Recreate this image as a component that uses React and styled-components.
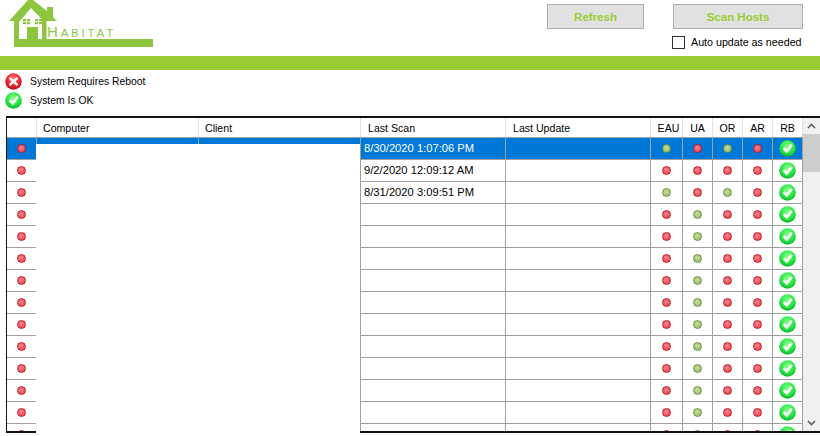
import React from "react";
import styled, { createGlobalStyle } from "styled-components";

const { useId } = React;

const GREEN = "#9acd32";
const LOGO_GREEN = "#8cc63f";
const COLUMNS = "30px 162px 162px 145px 145px 32px 30px 30px 30px 30px";

const GlobalStyle = createGlobalStyle`
  html, body {
    margin: 0;
    padding: 0;
    background: #fff;
    overflow: hidden;
  }
  body {
    font-family: "Liberation Sans", Arial, sans-serif;
    font-size: 10.6px;
    color: #000;
  }
`;

const Page = styled.div`
  width: 820px;
  height: 436px;
  overflow: hidden;
  display: flex;
  flex-direction: column;
`;

const Header = styled.header`
  height: 56px;
  display: flex;
  justify-content: space-between;
  padding-right: 17px;
  box-sizing: border-box;
`;

const Logo = styled.svg`
  width: 154px;
  height: 48px;
  display: block;
`;

const Actions = styled.div`
  display: grid;
  grid-template-columns: 97px 130px;
  column-gap: 29px;
  padding-top: 4px;
  align-content: start;
`;

const ActionButton = styled.button`
  height: 25px;
  padding: 0;
  background: #e1e1e1;
  border: 1px solid #adadad;
  color: ${GREEN};
  font-family: "Liberation Sans", Arial, sans-serif;
  font-size: 11.5px;
  font-weight: bold;
`;

const AutoUpdate = styled.label`
  grid-column: 2;
  display: flex;
  align-items: center;
  gap: 6px;
  margin: 6px 0 0 -1px;
  font-size: 10.7px;
  line-height: 14px;
  white-space: nowrap;
`;

const Box = styled.span`
  width: 11px;
  height: 11px;
  border: 1px solid #333;
  background: #fff;
`;

const Band = styled.div`
  height: 14px;
  background: ${GREEN};
`;

const Legend = styled.div`
  height: 46px;
  padding: 2px 0 0 5px;
  box-sizing: border-box;
  font-size: 10.4px;
`;

const LegendRow = styled.div`
  height: 19px;
  display: flex;
  align-items: center;
  gap: 8px;
`;

const GridFrame = styled.div`
  position: relative;
  height: 317px;
  margin-left: 6px;
  border-top: 2px solid #111;
  border-bottom: 2px solid #111;
  border-left: 1px solid #111;
  box-sizing: border-box;
  display: flex;
`;

const Table = styled.div`
  width: 796px;
  height: 313px;
  flex: none;
  overflow: hidden;
`;

const HeaderRow = styled.div`
  display: grid;
  grid-template-columns: ${COLUMNS};
  height: 20px;
  box-sizing: border-box;
  border-bottom: 1px solid #a0a0a0;
`;

const HeaderCell = styled.div`
  border-right: 1px solid #e2e2e2;
  box-sizing: border-box;
  display: flex;
  align-items: center;
  justify-content: ${(p) => (p.$center ? "center" : "flex-start")};
  padding-left: ${(p) => (p.$center ? `${p.$pad || 0}px` : `${p.$pad || 6}px`)};
  white-space: nowrap;
`;

const Row = styled.div`
  display: grid;
  grid-template-columns: ${COLUMNS};
  height: 22px;
  box-sizing: border-box;
  border-bottom: 1px solid #a0a0a0;
  background: ${(p) => (p.$selected ? "#0078d7" : "#fff")};
  color: ${(p) => (p.$selected ? "#fff" : "#000")};
`;

const Cell = styled.div`
  border-right: 1px solid #a0a0a0;
  box-sizing: border-box;
  display: flex;
  align-items: center;
  justify-content: ${(p) => (p.$center ? "center" : "flex-start")};
  padding: ${(p) => (p.$center ? "0 1px 1px 0" : "0 0 1px 3px")};
  font-size: 11.2px;
  white-space: nowrap;
`;

const Dot = styled.span`
  width: 9px;
  height: 9px;
  border-radius: 50%;
  box-sizing: border-box;
  border: 1px solid ${(p) => (p.$on ? "#6f9440" : "#c21a28")};
  background: ${(p) =>
    p.$on
      ? "radial-gradient(circle at 45% 40%, #c8dd9e, #8fb45c)"
      : "radial-gradient(circle at 45% 40%, #fb8a90, #e8323f)"};
`;

const Redaction = styled.div`
  position: absolute;
  left: 29px;
  top: 26px;
  bottom: -2px;
  width: 324px;
  background: #fff;
`;

const Scrollbar = styled.div`
  flex: 1;
  background: #f0f0f0;
  display: flex;
  flex-direction: column;
`;

const ScrollButton = styled.div`
  height: 16px;
  display: flex;
  align-items: center;
  justify-content: center;
  flex: none;
`;

const Thumb = styled.div`
  height: 38px;
  background: #cdcdcd;
`;

const ScrollSpace = styled.div`
  flex: 1;
`;

const Chevron = ({ down }) => (
  <svg width="9" height="6" viewBox="0 0 9 6">
    <path
      d={down ? "M1 1l3.5 3.5L8 1" : "M1 5l3.5-3.5L8 5"}
      fill="none"
      stroke="#606060"
      strokeWidth="1.7"
    />
  </svg>
);

const StatusIcon = ({ ok }) => {
  const id = useId();
  return (
    <svg width="17" height="17" viewBox="0 0 17 17" style={{ flex: "none" }}>
      <defs>
        <radialGradient id={id} cx="50%" cy="35%" r="70%">
          <stop offset="0%" stopColor={ok ? "#8bff8b" : "#ff8080"} />
          <stop offset="60%" stopColor={ok ? "#1fe83f" : "#ee2029"} />
          <stop offset="100%" stopColor={ok ? "#0aa52a" : "#a50c16"} />
        </radialGradient>
      </defs>
      <circle cx="8.5" cy="8.5" r="8.3" fill={`url(#${id})`} />
      {ok ? (
        <path d="M3.6 9l2.2-2 1.9 2.3L11.6 4l2.2 1.5L7.9 13.6z" fill="#fff" />
      ) : (
        <path
          d="M5.2 4l3.3 2.8L11.8 4l1.5 1.5-2.9 3 2.9 3-1.5 1.5-3.3-2.8L5.2 13l-1.5-1.5 2.9-3-2.9-3z"
          fill="#fff"
        />
      )}
    </svg>
  );
};

const scans = ["8/30/2020 1:07:06 PM", "9/2/2020 12:09:12 AM", "8/31/2020 3:09:51 PM"];
const rows = Array.from({ length: 14 }, (_, i) => ({
  scan: scans[i] || "",
  flags:
    i === 0 || i === 2
      ? [true, false, true, false]
      : i === 1
      ? [false, false, false, false]
      : [false, true, false, false],
}));

export default function App() {
  return (
    <Page>
      <GlobalStyle />
      <Header>
        <Logo viewBox="0 0 154 48">
          <path
            fill={LOGO_GREEN}
            fillRule="evenodd"
            d="M9 21L28 0h5l14 11V7h6v10l4 4H46.5v18H153v8H14V21zM19 22V39h23V19.5L31 8z"
          />
          <path
            fill={LOGO_GREEN}
            d="M27 27h11v13H27zM23 19h3v2.2h-3zM27 19h3v2.2h-3zM23 22h3v2.2h-3zM27 22h3v2.2h-3zM35 19h3v2.2h-3zM39 19h3v2.2h-3zM35 22h3v2.2h-3zM39 22h3v2.2h-3z"
          />
          <text
            x="47"
            y="37"
            fill={LOGO_GREEN}
            fontFamily="'Liberation Sans', sans-serif"
            fontSize="11.5"
            letterSpacing="2.8"
          >
            <tspan fontSize="15">H</tspan>ABITAT
          </text>
        </Logo>
        <Actions>
          <ActionButton type="button">Refresh</ActionButton>
          <ActionButton type="button">Scan Hosts</ActionButton>
          <AutoUpdate>
            <Box />
            Auto update as needed
          </AutoUpdate>
        </Actions>
      </Header>
      <Band />
      <Legend>
        <LegendRow>
          <StatusIcon />
          System Requires Reboot
        </LegendRow>
        <LegendRow>
          <StatusIcon ok />
          System Is OK
        </LegendRow>
      </Legend>
      <GridFrame>
        <Table>
          <HeaderRow>
            <HeaderCell />
            <HeaderCell>Computer</HeaderCell>
            <HeaderCell>Client</HeaderCell>
            <HeaderCell $pad={7}>Last Scan</HeaderCell>
            <HeaderCell $pad={7}>Last Update</HeaderCell>
            <HeaderCell $center $pad={4}>EAU</HeaderCell>
            <HeaderCell $center>UA</HeaderCell>
            <HeaderCell $center>OR</HeaderCell>
            <HeaderCell $center>AR</HeaderCell>
            <HeaderCell $center>RB</HeaderCell>
          </HeaderRow>
          {rows.map((row, i) => (
            <Row key={i} $selected={i === 0}>
              <Cell $center>
                <Dot />
              </Cell>
              <Cell />
              <Cell />
              <Cell>{row.scan}</Cell>
              <Cell />
              {row.flags.map((on, j) => (
                <Cell $center key={j}>
                  <Dot $on={on} />
                </Cell>
              ))}
              <Cell $center>
                <StatusIcon ok />
              </Cell>
            </Row>
          ))}
        </Table>
        <Redaction />
        <Scrollbar>
          <ScrollButton>
            <Chevron />
          </ScrollButton>
          <Thumb />
          <ScrollSpace />
          <ScrollButton>
            <Chevron down />
          </ScrollButton>
        </Scrollbar>
      </GridFrame>
    </Page>
  );
}
